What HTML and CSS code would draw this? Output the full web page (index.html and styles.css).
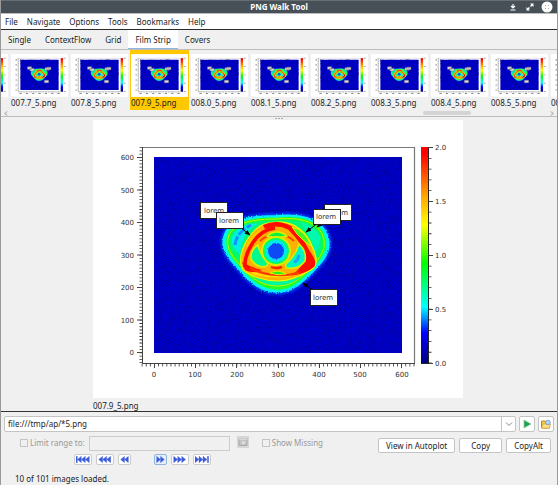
FILE: index.html
```html
<!DOCTYPE html>
<html lang="en">
<head>
<meta charset="utf-8">
<title>PNG Walk Tool</title>
<link rel="stylesheet" href="styles.css">
</head>
<body>
<svg class="defs" aria-hidden="true">
  <defs>
    <linearGradient id="scale" x1="0" y1="1" x2="0" y2="0">
      <stop offset="0" stop-color="#000080"/>
      <stop offset=".14" stop-color="#0000ff"/>
      <stop offset=".26" stop-color="#00ffff"/>
      <stop offset=".46" stop-color="#00ff00"/>
      <stop offset=".64" stop-color="#ffff00"/>
      <stop offset=".78" stop-color="#ffa000"/>
      <stop offset=".97" stop-color="#ff0000"/>
    </linearGradient>
    <filter id="grain" x="0" y="0" width="100%" height="100%" color-interpolation-filters="sRGB">
      <feTurbulence type="fractalNoise" baseFrequency=".7" numOctaves="2" seed="4"/>
      <feColorMatrix values="0 0 0 0 0  0 0 0 0 0  0 0 0 0 .35  2.4 0 0 0 -1.05"/>
    </filter>
    <filter id="rough" x="-10%" y="-10%" width="120%" height="120%">
      <feTurbulence type="fractalNoise" baseFrequency=".8" numOctaves="1" seed="7" result="n"/>
      <feDisplacementMap in="SourceGraphic" in2="n" scale="3" xChannelSelector="R" yChannelSelector="G"/>
    </filter>
    <filter id="soft1" x="-20%" y="-20%" width="140%" height="140%"><feGaussianBlur stdDeviation=".6"/></filter>
    <filter id="soft2" x="-20%" y="-20%" width="140%" height="140%"><feGaussianBlur stdDeviation="1.7"/></filter>
    <path id="shell" d="M277 216C300 214 317 219 325 231C333 246 327 257 315 269C301 284 291 292 277 292C263 292 251 284 240 270C227 257 220 247 225 234C231 219 252 216 277 216Z"/>
    <marker id="tip" viewBox="0 0 8 6" refX="7" refY="3" markerWidth="6" markerHeight="5" markerUnits="userSpaceOnUse" orient="auto"><path d="M0 0L8 3L0 6Z"/></marker>

    <g id="heat">
      <rect x="154" y="157" width="248" height="196" fill="#0000cc"/>
      <rect x="154" y="157" width="248" height="196" filter="url(#grain)" opacity=".6"/>
      <g filter="url(#rough)">
        <use href="#shell" fill="#0070ff" stroke="#0050ff" stroke-width="5" filter="url(#soft2)"/>
        <use href="#shell" fill="#00ffc0" stroke="#00f0ff" stroke-width="2" filter="url(#soft1)"/>
      </g>
      <g filter="url(#soft1)" fill="none">
        <path d="M277 219C299 217 314 221 321 232C328 245 323 255 312 266C299 281 290 288 277 288C264 288 253 280 243 268C230 255 225 246 229 235C235 222 254 219 277 219Z" fill="#00f878" stroke="#20ff20" stroke-width="3"/>
        <path d="M277 219C299 217 314 221 321 232C328 245 323 255 312 266C299 281 290 286 277 286C264 286 253 280 243 268C230 255 225 246 229 235C235 222 254 219 277 219Z" stroke="#c0f800"/>
        <path d="M232 244Q230 230 247 225Q253 223 257 224Q241 234 240 254Q234 250 232 244Z" fill="#00f0e0"/>
        <path d="M235 245Q236 233 251 225" stroke="#1490ff" stroke-width="3" stroke-dasharray="9 2"/>
        <path d="M300 222Q318 227 320 239Q320 249 315 252Q312 238 300 222Z" fill="#00f8b0"/>
        <path d="M253 277Q276 285 300 278Q289 285 277 285Q265 285 253 277Z" fill="#00f8a0"/>
        <path d="M277 222C295 221 307 233 312 246C318 259 318 267 309 271C299 277 290 281 278 281C264 281 250 276 243 270C238 262 241 250 247 240C256 226 264 222 277 222Z" fill="#ffb000" stroke="#e8ff00" stroke-width="1.200"/>
        <path d="M252 273Q276 280 300 273" stroke="#ffe000" stroke-width="2"/>
        <path d="M247 247Q250 238 261 230" stroke="#ffc800" stroke-width="2"/>
        <path d="M275 228Q260 230 252 244Q244 257 245 267" stroke="#ff1000" stroke-width="3.600"/>
        <path d="M264 227Q277 221 290 228Q304 242 309 256" stroke="#ff0800" stroke-width="4.600"/>
        <path d="M306 248Q317 260 314 266Q306 273 292 275Q306 268 306 248Z" fill="#ff0800" stroke="#ff0800" stroke-width="1.200"/>
        <path d="M242 262Q250 267 262 270Q252 274 245 270Z" fill="#ff0800"/>
        <path d="M250 268Q262 274 276 275Q290 276 300 272" stroke="#ff3800" stroke-width="2.200"/>
        <path d="M260 241Q277 226 294 241" stroke="#ff4000" stroke-width="2"/>
        <path d="M292 227Q306 231 311 246Q302 240 297 234Z" fill="#40f820" stroke="#e0f000" stroke-width="1"/>
        <path d="M267 236Q277 228 287 236Q277 239 267 236Z" fill="#10f040" stroke="#d8f000" stroke-width="1.400"/>
        <path d="M258 245Q250 250 251 259Q257 269 267 266Q269 262 263 257Q259 250 258 245Z" fill="#00f890" stroke="#d8f000" stroke-width="1.600"/>
        <path d="M299 244Q307 251 305 261Q298 270 287 268Q283 265 290 260Q297 252 299 244Z" fill="#00f8c0" stroke="#d8f000" stroke-width="1.600"/>
        <path d="M294 262Q298 261 299 255" stroke="#20a0ff" stroke-width="3"/>
        <path d="M270 273Q278 269 286 274Q278 276 270 273Z" fill="#20f020" stroke="#d8f000" stroke-width="1"/>
        <circle cx="276" cy="251" r="14" fill="#00ff60" stroke="#d8f000" stroke-width="2"/>
        <circle cx="276" cy="251" r="11" fill="#00e8f0"/>
        <circle cx="276" cy="251" r="8" fill="#0848f4" filter="url(#rough)"/>
        <path d="M271 267Q276 269 282 267" stroke="#ff2000" stroke-width="2.400"/>
      </g>
    </g>

    <g id="plot">
      <rect x="93" y="120" width="370" height="278" fill="#fff"/>
      <path d="M142 147.500H414.500V363" fill="none" stroke="#777" stroke-width="1.200"/>
      <path d="M142.500 147V363.500H415" fill="none" stroke="#444" stroke-width="1"/>
      <path d="M141 147.200V364" stroke="#333" stroke-width="3" stroke-dasharray=".8 2.457"/>
      <path d="M141.700 365H415" stroke="#333" stroke-width="3" stroke-dasharray=".8 3.320"/>
      <path d="M137 157.500h5M137 190h5M137 222.500h5M137 255h5M137 287.500h5M137 320h5M137 352.500h5M154.500 363v5M195.500 363v5M236.500 363v5M278.500 363v5M319.500 363v5M360.500 363v5M401.500 363v5" stroke="#444" stroke-width="1"/>
      <rect x="421" y="147" width="8" height="216" fill="url(#scale)"/>
      <path d="M428.500 147.500V363.500M421 363.500h8" stroke="#222" fill="none"/>
      <path d="M430 147.200V364" stroke="#333" stroke-width="3" stroke-dasharray=".8 9.970"/>
      <path d="M429 147.500h4M429 201.500h4M429 255.500h4M429 309.500h4M429 363.500h4" stroke="#444"/>
      <use href="#heat"/>
    </g>

    <g id="thumb">
      <use href="#plot"/>
      <path d="M137 147V366M142 366H415" stroke="#999" stroke-width="4" stroke-dasharray="6 10"/>
      <path d="M127 154V356" stroke="#999" stroke-width="10" stroke-dasharray="7 25.600"/>
      <path d="M148 376H410" stroke="#888" stroke-width="7" stroke-dasharray="14 27.200"/>
      <path d="M442 144V366" stroke="#aaa" stroke-width="12" stroke-dasharray="6 48"/>
      <rect x="416" y="147" width="14" height="216" fill="url(#scale)"/>
      <g fill="#ddd" stroke="#777" stroke-width="3">
        <path d="M200 203h27v16h-27zM325 205h27v16h-27zM216 213h27v16h-27zM313 209h27v16h-27zM310 290h27v16h-27z"/>
      </g>
    </g>
    <path id="back" d="M6 0L0 5L6 10Z"/>
    <path id="fwd" d="M0 0L6 5L0 10Z"/>
  </defs>
</svg>

<div class="window">
  <header class="titlebar">
    <h1>PNG Walk Tool</h1>
    <div class="window-buttons">
      <button type="button" aria-label="Minimize"><svg viewBox="0 0 12 12"><path d="M6 3V7M4 5L6 7L8 5M3.500 9H8.500" stroke="#fff" stroke-width="1.200" fill="none"/></svg></button>
      <button type="button" aria-label="Maximize"><svg viewBox="0 0 12 12"><path d="M6 2.500H9.500V6ZM2.500 6V9.500H6Z" fill="#fff"/><path d="M4 8L8 4" stroke="#fff" stroke-width="1.500" stroke-dasharray="2 1.600"/></svg></button>
      <button type="button" aria-label="Close"><svg viewBox="0 0 12 12"><circle cx="6" cy="6" r="5.500" fill="#fff"/><path d="M4 4l.8.8M8 4l-.8.8M4 8l.8-.8M8 8l-.8-.8" stroke="#999"/></svg></button>
    </div>
  </header>

  <nav class="menubar">
    <button type="button">File</button>
    <button type="button">Navigate</button>
    <button type="button">Options</button>
    <button type="button">Tools</button>
    <button type="button">Bookmarks</button>
    <button type="button">Help</button>
  </nav>

  <div class="tabs" role="tablist">
    <button type="button" role="tab">Single</button>
    <button type="button" role="tab">ContextFlow</button>
    <button type="button" role="tab">Grid</button>
    <button type="button" role="tab" class="active" aria-selected="true">Film Strip</button>
    <button type="button" role="tab">Covers</button>
  </div>

  <section class="strip">
    <div class="frames">
      <div class="frame"><svg viewBox="93 120 370 278"><use href="#thumb"/></svg></div>
      <div class="frame"><svg viewBox="93 120 370 278"><use href="#thumb"/></svg><span>007.7_5.png</span></div>
      <div class="frame"><svg viewBox="93 120 370 278"><use href="#thumb"/></svg><span>007.8_5.png</span></div>
      <div class="frame selected"><svg viewBox="93 120 370 278"><use href="#thumb"/></svg><span>007.9_5.png</span></div>
      <div class="frame"><svg viewBox="93 120 370 278"><use href="#thumb"/></svg><span>008.0_5.png</span></div>
      <div class="frame"><svg viewBox="93 120 370 278"><use href="#thumb"/></svg><span>008.1_5.png</span></div>
      <div class="frame"><svg viewBox="93 120 370 278"><use href="#thumb"/></svg><span>008.2_5.png</span></div>
      <div class="frame"><svg viewBox="93 120 370 278"><use href="#thumb"/></svg><span>008.3_5.png</span></div>
      <div class="frame"><svg viewBox="93 120 370 278"><use href="#thumb"/></svg><span>008.4_5.png</span></div>
      <div class="frame"><svg viewBox="93 120 370 278"><use href="#thumb"/></svg><span>008.5_5.png</span></div>
      <div class="frame"><svg viewBox="93 120 370 278"><use href="#thumb"/></svg><span>008.6_5.png</span></div>
    </div>
    <div class="scrollbar">
      <svg viewBox="0 0 4 5"><path d="M3 .5L1 2.500L3 4.500" fill="none" stroke="#888"/></svg>
      <div class="track"><div class="thumb"></div></div>
      <svg viewBox="0 0 4 5"><path d="M1 .5L3 2.500L1 4.500" fill="none" stroke="#888"/></svg>
    </div>
  </section>

  <div class="splitter"><i></i><i></i><i></i></div>

  <main>
    <figure class="preview">
      <svg viewBox="93 120 370 278" class="plot">
        <use href="#plot"/>
        <g class="end">
          <text x="134" y="160">600</text><text x="134" y="193">500</text><text x="134" y="225">400</text><text x="134" y="258">300</text><text x="134" y="290">200</text><text x="134" y="323">100</text><text x="134" y="355">0</text>
        </g>
        <g class="mid">
          <text x="154" y="377">0</text><text x="195" y="377">100</text><text x="237" y="377">200</text><text x="278" y="377">300</text><text x="319" y="377">400</text><text x="360" y="377">500</text><text x="402" y="377">600</text>
        </g>
        <g>
          <text x="435" y="150">2.0</text><text x="435" y="204">1.5</text><text x="435" y="258">1.0</text><text x="435" y="312">0.5</text><text x="435" y="366">0.0</text>
        </g>
        <g class="notes">
          <rect x="200.500" y="202.500" width="27" height="16"/><text x="204" y="213">lorem</text>
          <path d="M240 227L250 235" marker-end="url(#tip)"/>
          <rect x="216.500" y="212.500" width="27" height="16"/><text x="219" y="223">lorem</text>
          <path d="M326 220L317 227" marker-end="url(#tip)"/>
          <rect x="324.500" y="204.500" width="27" height="16"/><text x="328" y="215">lorem</text>
          <path d="M318 223L306 232" marker-end="url(#tip)"/>
          <rect x="313.500" y="209.500" width="27" height="15"/><text x="316" y="219">lorem</text>
          <path d="M314 291L303 283" marker-end="url(#tip)"/>
          <rect x="310.500" y="289.500" width="27" height="16"/><text x="313" y="300">lorem</text>
        </g>
      </svg>
      <figcaption>007.9_5.png</figcaption>
    </figure>
  </main>

  <footer class="panel">
    <div class="address">
      <div class="combo">
        <input type="text" aria-label="File template" value="file:///tmp/ap/*5.png">
        <button type="button" aria-label="Recent"><svg viewBox="0 0 10 10"><path d="M2 3.500L5 6.500L8 3.500" fill="none" stroke="#888"/></svg></button>
      </div>
      <button type="button" class="square" aria-label="Go"><svg viewBox="0 0 10 10"><path d="M2 1L9 5L2 9Z" fill="#23a050" stroke="#8ccba4" stroke-width=".8"/></svg></button>
      <button type="button" class="square" aria-label="Open"><svg viewBox="0 0 10 10"><path d="M.5 2H4L5 3H8.500V9H.5Z" fill="#f5c84c" stroke="#b98a20"/><path d="M2 5H9.500L8.500 9H.5Z" fill="#ffe08a" stroke="#c99a2c" stroke-width=".6"/><circle cx="7" cy="3.500" r="2.300" fill="#b5d3f5" stroke="#6c97c8" stroke-width=".8"/></svg></button>
    </div>

    <div class="controls">
      <div class="left">
        <div class="range">
          <label><input type="checkbox" disabled>Limit range to:</label>
          <input type="text" class="range-field" aria-label="Time range" disabled>
          <button type="button" class="calendar" aria-label="Time range tool" disabled><svg viewBox="0 0 12 12"><path d="M0 0H12V12H0Z" fill="#d6d6d6"/><path d="M2 2.500H10V9.500H2Z" fill="#c4c4c4" stroke="#aaa"/><path d="M2 3H10M6 5V8L8.500 5.500" stroke="#eee" fill="none"/></svg></button>
          <label><input type="checkbox" disabled>Show Missing</label>
        </div>
        <div class="steps">
          <button type="button" aria-label="First"><svg viewBox="0 0 21 10" class="w3"><path d="M0 0H2V10H0Z"/><use href="#back" x="2"/><use href="#back" x="8"/><use href="#back" x="14"/></svg></button>
          <button type="button" aria-label="Previous interval"><svg viewBox="0 0 21 10" class="w3"><use href="#back" x="1"/><use href="#back" x="7"/><use href="#back" x="13"/></svg></button>
          <button type="button" aria-label="Previous"><svg viewBox="0 0 14 10" class="w2"><use href="#back" x="1"/><use href="#back" x="7"/></svg></button>
          <button type="button" class="focus" aria-label="Next"><svg viewBox="0 0 14 10" class="w2"><use href="#fwd" x="1"/><use href="#fwd" x="7"/></svg></button>
          <button type="button" aria-label="Next interval"><svg viewBox="0 0 21 10" class="w3"><use href="#fwd" x="1"/><use href="#fwd" x="7"/><use href="#fwd" x="13"/></svg></button>
          <button type="button" aria-label="Last"><svg viewBox="0 0 21 10" class="w3"><use href="#fwd" x="0"/><use href="#fwd" x="6"/><use href="#fwd" x="12"/><path d="M18.500 0H20.500V10H18.500Z"/></svg></button>
        </div>
      </div>
      <div class="actions">
        <button type="button">View in Autoplot</button>
        <button type="button">Copy</button>
        <button type="button">CopyAlt</button>
      </div>
    </div>
    <p class="status">10 of 101 images loaded.</p>
  </footer>
</div>
</body>
</html>
```
FILE: styles.css
```css
* {
  box-sizing: border-box;
}

body {
  margin: 0;
  background: #f0f0f0;
  color: #1c1c1c;
  font: 8px/12px "Noto Sans", sans-serif;
}

button,
input {
  margin: 0;
  padding: 0;
  border: 0;
  background: none;
  color: inherit;
  font: inherit;
}

svg {
  display: block;
}

.defs {
  position: absolute;
  width: 0;
  height: 0;
}

.window {
  display: flex;
  flex-direction: column;
  min-height: 100vh;
  border: solid #999;
  border-width: 0 1px 1px;
}

.titlebar {
  display: grid;
  grid-template-columns: 1fr auto 1fr;
  align-items: center;
  height: 14px;
  border-top: 1px solid #686e72;
  border-bottom: 1px solid #bbb;
  background: #475057;
  color: #fff;
}

.titlebar h1 {
  grid-column: 2;
  margin: 0;
  font-size: 8px;
  line-height: 12px;
}

.window-buttons {
  display: flex;
  justify-content: flex-end;
  gap: 5px;
  padding-right: 4px;
}

.window-buttons svg {
  width: 12px;
  height: 12px;
}

.menubar {
  display: flex;
  height: 16px;
  border-bottom: 1px solid #2c2c2c;
  background: #fff;
}

.menubar button {
  padding: 0 5px 0 4px;
}

.tabs {
  display: flex;
  height: 20px;
  border-bottom: 1px solid #bdbdbd;
}

.tabs button {
  padding: 0 7px;
}

.tabs .active {
  background: #fff;
  box-shadow: inset 0 -1px #8db5dd;
}

.strip {
  overflow: hidden;
  border-bottom: 1px solid #bdbdbd;
}

.frames {
  display: flex;
  gap: 1px;
  height: 60px;
  margin-left: -51px;
}

.frame {
  flex: none;
  width: 59px;
  padding: 4px 1px 0;
}

.frame svg {
  width: 57px;
  height: 43px;
}

.selected {
  background: #ffc800;
}

.scrollbar {
  display: flex;
  align-items: center;
  gap: 4px;
  height: 6px;
  padding: 0 3px;
}

.scrollbar svg {
  width: 4px;
  height: 5px;
}

.track {
  display: flex;
  flex: 1;
}

.track .thumb {
  width: 9%;
  height: 4px;
  margin-left: 77%;
  border-radius: 2px;
  background: #d4d4d4;
}

.splitter {
  display: flex;
  justify-content: center;
  gap: 1px;
  height: 3px;
  padding-top: 1px;
}

.splitter i {
  width: 2px;
  height: 1px;
  background: #aaa;
}

main {
  flex: 1;
  padding-right: 2px;
}

.preview {
  width: fit-content;
  margin: 0 auto;
}

.plot {
  height: calc(100vh - 207px);
  aspect-ratio: 370 / 278;
}

.plot text {
  fill: #333;
  font: 7px "DejaVu Sans", sans-serif;
}

.end {
  text-anchor: end;
}

.mid {
  text-anchor: middle;
}

.notes rect {
  fill: #fff;
  stroke: #222;
}

.notes path {
  stroke: #000;
}

figcaption {
  height: 13px;
  padding-top: 2px;
  line-height: 11px;
}

.panel {
  border-top: 1px solid #333;
  padding: 4px 3px 0;
}

.address {
  display: flex;
  gap: 3px;
}

.combo {
  display: flex;
  flex: 1;
  height: 16px;
  border: 1px solid #c4c4c4;
  border-radius: 2px;
  background: #fff;
}

.combo input {
  flex: 1;
  min-width: 0;
  padding-left: 3px;
}

.combo button {
  display: grid;
  place-items: center;
  width: 14px;
  border-left: 1px solid #c4c4c4;
}

.combo svg {
  width: 10px;
  height: 10px;
}

.square {
  display: grid;
  place-items: center;
  width: 16px;
  height: 16px;
  border: 1px solid #c4c4c4;
  border-radius: 2px;
  background: #fff;
}

.square svg {
  width: 10px;
  height: 10px;
}

.controls {
  display: flex;
  justify-content: space-between;
  padding: 3px 3px 0 16px;
}

.range {
  display: flex;
  align-items: center;
  height: 16px;
  color: #999;
}

.range label {
  display: flex;
  align-items: center;
  gap: 2px;
}

.range [type="checkbox"] {
  appearance: none;
  width: 8px;
  height: 8px;
  border: 1px solid #c4c4c4;
}

.range-field {
  width: 141px;
  height: 15px;
  margin-left: 4px;
  border: 1px solid #ccc;
}

.calendar {
  margin: 0 13px 3px 7px;
}

.calendar svg {
  width: 12px;
  height: 12px;
}

.steps {
  display: flex;
  gap: 4px;
  margin-top: 3px;
  padding-left: 54px;
}

.steps button {
  padding: 1px;
  border: 1px solid #ccc;
  border-radius: 2px;
  background: #fff;
}

.steps .focus {
  margin-left: 19px;
  border-color: #8db5dd;
  background: #e4effa;
}

.steps svg {
  height: 7px;
  fill: #3a5be0;
  stroke: #4a65c8;
  stroke-width: .5px;
}

.w3 {
  width: 14px;
}

.w2 {
  width: 9px;
}

.actions {
  display: flex;
  gap: 4px;
  margin-top: 3px;
}

.actions button {
  min-width: 43px;
  height: 15px;
  padding: 0 7px;
  border: 1px solid #c4c4c4;
  border-radius: 2px;
  background: #fff;
  line-height: 12px;
}

.status {
  margin: 0;
  padding: 8px 11px 0;
}
```
